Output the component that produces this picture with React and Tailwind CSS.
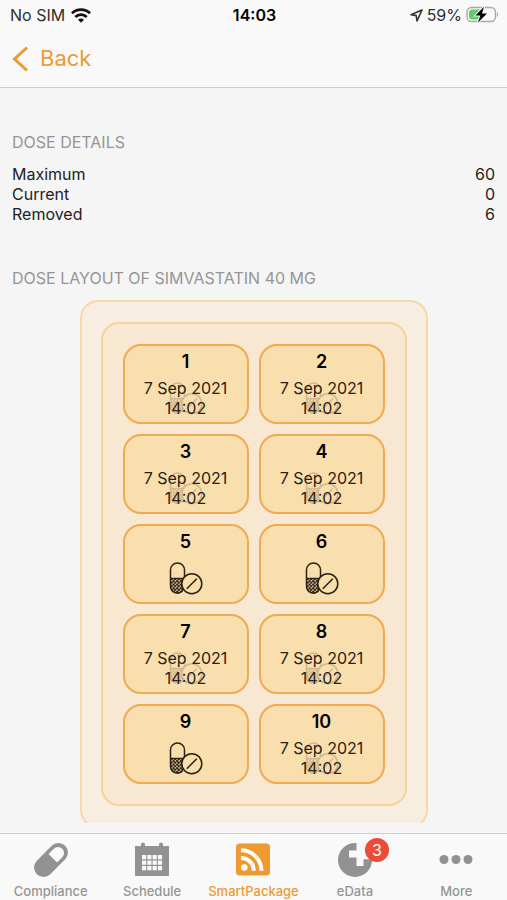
const doses = [
  { id: 1, taken: true },
  { id: 2, taken: true },
  { id: 3, taken: true },
  { id: 4, taken: true },
  { id: 5, taken: false },
  { id: 6, taken: false },
  { id: 7, taken: true },
  { id: 8, taken: true },
  { id: 9, taken: false },
  { id: 10, taken: true },
];

const details = [
  { label: "Maximum", value: 60 },
  { label: "Current", value: 0 },
  { label: "Removed", value: 6 },
];

function WifiIcon() {
  return (
    <svg width="20" height="15" viewBox="0 0 20 15" fill="none" stroke="#111" strokeWidth="2.8">
      <path d="M1 5.2C6 .4 14 .4 19 5.2" />
      <path d="M4.3 8.9c3.2-3.1 8.2-3.1 11.4 0" />
      <path d="M10 14.8 7 11.8c1.7-1.6 4.3-1.6 6 0z" fill="#111" stroke="none" />
    </svg>
  );
}

function LocationIcon() {
  return (
    <svg width="13" height="13" viewBox="0 0 13 13" fill="none" stroke="#333" strokeWidth="1.6" strokeLinejoin="round">
      <path d="M12 1 1 5.7l5.2.9.8 5.4z" />
    </svg>
  );
}

function BatteryIcon() {
  return (
    <svg width="33" height="18" viewBox="0 0 33 18">
      <rect x="1" y="1.5" width="28.5" height="14" rx="4.5" fill="none" stroke="#a9a9a9" strokeWidth="1.4" />
      <path d="M31 6.2c1.6.6 1.6 4 0 4.6z" fill="#a9a9a9" />
      <path d="M6 3.5h10v10H6a3 3 0 0 1-3-3v-4a3 3 0 0 1 3-3z" fill="#62cb66" />
      <path
        d="M18 .8 9.4 9.5h5l-2.6 7.2L21 7.5h-5z"
        fill="#000"
        stroke="#f9f9f9"
        strokeWidth="2"
        paintOrder="stroke"
      />
    </svg>
  );
}

function PillsIcon({ className }) {
  return (
    <svg className={className} width="34" height="33" viewBox="0 0 34 33" fill="none" stroke="#2b2115" strokeWidth="1.5">
      <defs>
        <pattern id="dots" width="3.6" height="3.6" patternUnits="userSpaceOnUse">
          <circle cx=".9" cy=".9" r=".6" fill="#2b2115" />
          <circle cx="2.7" cy="2.7" r=".6" fill="#2b2115" />
        </pattern>
      </defs>
      <path d="M1.5 17h14v7.5a7 7 0 0 1-14 0z" fill="url(#dots)" stroke="none" />
      <path d="M15.5 15.5V8a7 7 0 0 0-14 0v16.5A7 7 0 0 0 14 28.4" />
      <path d="M1.5 16.5h13.2" />
      <circle cx="22.8" cy="21.7" r="10" fill="#fadfae" />
      <path d="m17.8 26.7 10-10" />
    </svg>
  );
}

function ComplianceIcon() {
  return (
    <svg width="36" height="36" viewBox="0 0 36 36">
      <g transform="rotate(45 18 18)">
        <rect x="8.5" y="-2" width="19" height="40" rx="9.5" fill="#929292" />
        <path d="M12 15.5V8a6 6 0 0 1 12 0v7.500z" fill="#f9f9f9" />
      </g>
    </svg>
  );
}

function ScheduleIcon() {
  return (
    <svg width="36" height="36" viewBox="0 0 36 36" fill="#929292">
      <path d="M1 4h6V2.500a2 2 0 0 1 4 0V4h14V2.500a2 2 0 0 1 4 0V4h6v30H1z" />
      <g fill="#f9f9f9">
        {[13, 18.5, 24].map((y) =>
          [8, 13.3, 18.6, 23.9].map((x) => <rect key={`${x}-${y}`} x={x} y={y} width="4.2" height="4.3" />)
        )}
      </g>
    </svg>
  );
}

function FeedIcon() {
  return (
    <svg width="36" height="36" viewBox="0 0 36 36">
      <rect x="1" y="1.5" width="34" height="32" rx="3.5" fill="#ee9a31" />
      <circle cx="9.3" cy="25.5" r="3.2" fill="#fff" />
      <g fill="none" stroke="#fff" strokeWidth="4">
        <path d="M6 16a12.800 12.800 0 0 1 12.800 12.800" />
        <path d="M6 8.300a20.500 20.500 0 0 1 20.500 20.500" />
      </g>
    </svg>
  );
}

function DataIcon() {
  return (
    <svg width="36" height="36" viewBox="0 0 36 36">
      <path d="M19.500 1A17 17 0 1 0 35 17.200h-8.500V24h-7v-8.500H12V8.500h7.500z" fill="#929292" />
    </svg>
  );
}

function MoreIcon() {
  return (
    <svg width="36" height="36" viewBox="0 0 36 36" fill="#929292">
      <circle cx="6" cy="17.500" r="4.500" />
      <circle cx="18" cy="17.500" r="4.500" />
      <circle cx="30" cy="17.500" r="4.500" />
    </svg>
  );
}

const tabs = [
  { label: "Compliance", Icon: ComplianceIcon },
  { label: "Schedule", Icon: ScheduleIcon },
  { label: "SmartPackage", Icon: FeedIcon, active: true },
  { label: "eData", Icon: DataIcon, badge: 3 },
  { label: "More", Icon: MoreIcon },
];

function StatusBar() {
  return (
    <div className="grid grid-cols-3 items-center h-[30px] pl-[10px] pr-2 text-base text-[#2f2f2f]">
      <div className="flex items-center gap-[6px]">
        <span>No SIM</span>
        <WifiIcon />
      </div>
      <span className="text-center font-semibold text-black">14:03</span>
      <div className="flex items-center justify-end gap-1">
        <LocationIcon />
        <span>59%</span>
        <BatteryIcon />
      </div>
    </div>
  );
}

function Dose({ id, taken }) {
  return (
    <li className="relative h-20 rounded-[18px] border-2 border-[#efaa52] bg-[#fadfae] pt-1 text-center">
      <PillsIcon
        className={taken ? "absolute inset-x-0 top-9 mx-auto opacity-20" : "absolute inset-x-0 top-9 mx-auto"}
      />
      <h3 className="text-lg leading-6 font-semibold text-black">{id}</h3>
      {taken && (
        <p className="relative pt-1 text-base leading-5 text-[#2b2115]">
          7 Sep 2021
          <br />
          14:02
        </p>
      )}
    </li>
  );
}

export default function App() {
  return (
    <div className="flex flex-col h-screen bg-[#f5f5f5] font-['Inter',sans-serif]">
      {/* Header */}
      <header className="border-b border-[#cfcfcf] bg-[#f9f9f9]">
        <StatusBar />
        <button className="flex items-center gap-3 h-[57px] pl-3 text-[22px] text-[#ee9a31]">
          <svg width="16" height="26" viewBox="0 0 16 26" fill="none" stroke="currentColor" strokeWidth="3">
            <path d="M15 1.500 2.500 13 15 24.500" />
          </svg>
          Back
        </button>
      </header>

      {/* Content */}
      <main className="flex-1 min-h-0 overflow-hidden mb-[10px]">
        <section className="px-3 pt-11">
          <h2 className="text-base leading-5 text-[#959595]">DOSE DETAILS</h2>
          <dl className="pt-3 text-base leading-5 text-[#222]">
            {details.map((d) => (
              <div key={d.label} className="flex justify-between">
                <dt>{d.label}</dt>
                <dd>{d.value}</dd>
              </div>
            ))}
          </dl>
        </section>

        <section className="px-3 pt-11">
          <h2 className="text-base leading-5 text-[#959595]">DOSE LAYOUT OF SIMVASTATIN 40 MG</h2>
          <div className="mx-auto mt-3 max-w-[348px] rounded-[18px] border-2 border-[#f6d9a9] bg-[#f7ede0] px-[19px] py-5">
            <ul className="grid grid-cols-2 gap-[10px] rounded-[18px] border-2 border-[#f5d39b] bg-[#f8e8d1] p-5">
              {doses.map((dose) => (
                <Dose key={dose.id} {...dose} />
              ))}
            </ul>
          </div>
        </section>
      </main>

      {/* Tab bar */}
      <nav className="grid grid-cols-5 border-t border-[#cfcfcf] bg-[#f9f9f9] h-[67px] pt-2">
        {tabs.map(({ label, Icon, active, badge }) => (
          <button
            key={label}
            className={
              active
                ? "flex flex-col items-center gap-[3px] text-[13px] leading-5 font-medium text-[#ee9a31]"
                : "flex flex-col items-center gap-[3px] text-[13px] leading-5 font-medium text-[#959595]"
            }
          >
            <span className="relative">
              <Icon />
              {badge && (
                <span className="absolute -top-1 -right-4 flex size-6 items-center justify-center rounded-full bg-[#ee4b36] text-base font-normal text-white">
                  {badge}
                </span>
              )}
            </span>
            {label}
          </button>
        ))}
      </nav>
    </div>
  );
}
